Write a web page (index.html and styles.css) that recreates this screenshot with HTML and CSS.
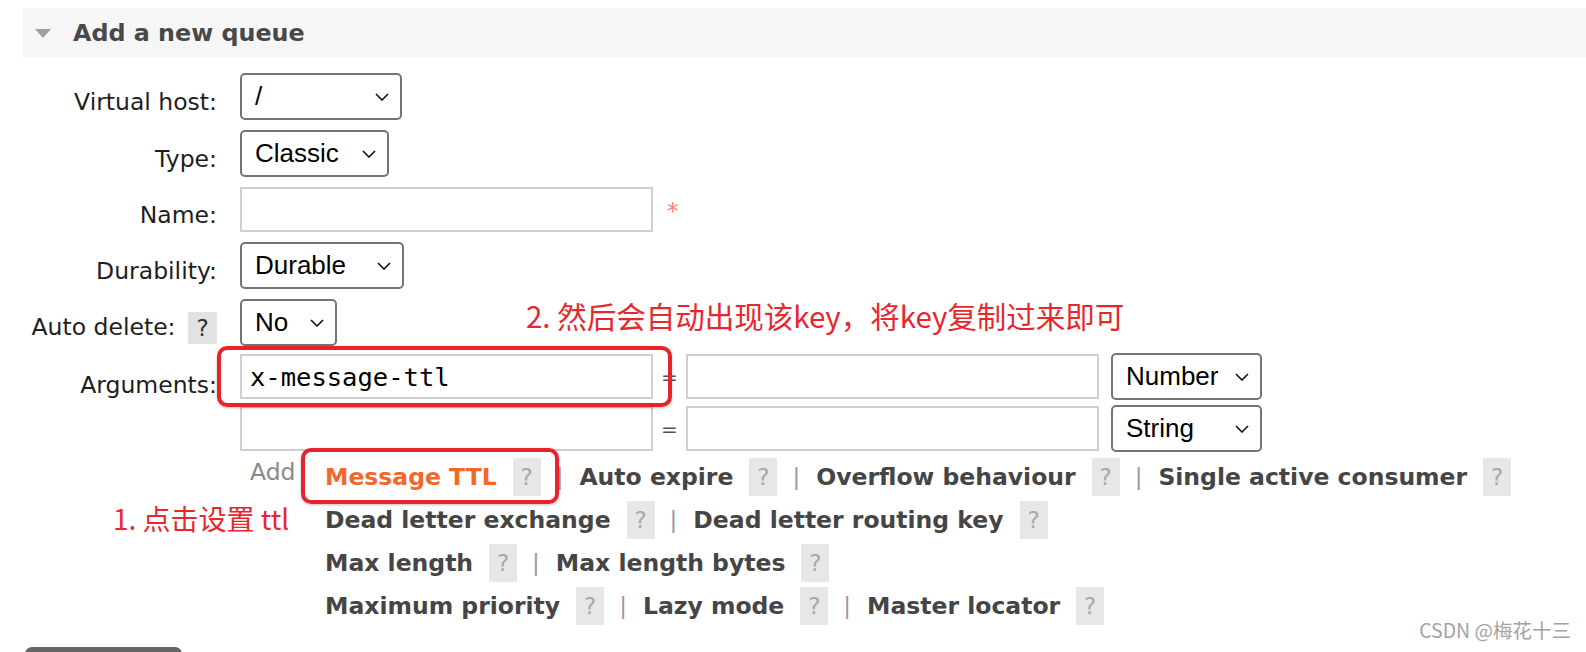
FILE: index.html
```html
<!DOCTYPE html>
<html lang="en">
<head>
    <meta charset="UTF-8">
    <title>Add a new queue</title>
    <link rel="stylesheet" href="styles.css">
</head>
<body>

<div class="section">
    <h2 class="section-head"><span class="tri"></span>Add a new queue</h2>

    <div class="form">
        <div class="lbl">Virtual host:</div>
        <div class="field">
            <div class="select w-vhost"><span>/</span>
                <svg class="chev" width="14" height="8" viewBox="0 0 14 8"><polyline points="1,1 7,7 13,1"/></svg></div>
        </div>

        <div class="lbl">Type:</div>
        <div class="field">
            <div class="select w-type"><span>Classic</span>
                <svg class="chev" width="14" height="8" viewBox="0 0 14 8"><polyline points="1,1 7,7 13,1"/></svg></div>
        </div>

        <div class="lbl">Name:</div>
        <div class="field">
            <div class="input w-name"></div>
            <span class="req">*</span>
        </div>

        <div class="lbl">Durability:</div>
        <div class="field">
            <div class="select w-dur"><span>Durable</span>
                <svg class="chev" width="14" height="8" viewBox="0 0 14 8"><polyline points="1,1 7,7 13,1"/></svg></div>
        </div>

        <div class="lbl">Auto delete: <span class="help dark">?</span></div>
        <div class="field">
            <div class="select w-no"><span>No</span>
                <svg class="chev" width="14" height="8" viewBox="0 0 14 8"><polyline points="1,1 7,7 13,1"/></svg></div>
            <div class="note note-two">2. 然后会自动出现该key，将key复制过来即可</div>
        </div>

        <div class="lbl args-lbl">Arguments:</div>
        <div class="field args">
            <div class="input w-arg mono">x-message-ttl</div>
            <span class="eq">=</span>
            <div class="input w-arg"></div>
            <div class="select w-kind"><span>Number</span>
                <svg class="chev" width="14" height="8" viewBox="0 0 14 8"><polyline points="1,1 7,7 13,1"/></svg></div>

            <div class="input w-arg"></div>
            <span class="eq">=</span>
            <div class="input w-arg"></div>
            <div class="select w-kind"><span>String</span>
                <svg class="chev" width="14" height="8" viewBox="0 0 14 8"><polyline points="1,1 7,7 13,1"/></svg></div>

            <div class="mark mark-key"></div>
        </div>

        <div class="lbl"></div>
        <div class="field arg-links">
            <span class="add">Add</span>
            <div class="link-rows">
                <div class="link-row">
                    <span class="alink hot">Message TTL</span><span class="help">?</span><span class="sep">|</span>
                    <span class="alink">Auto expire</span><span class="help">?</span><span class="sep">|</span>
                    <span class="alink">Overflow behaviour</span><span class="help">?</span><span class="sep">|</span>
                    <span class="alink">Single active consumer</span><span class="help">?</span>
                </div>
                <div class="link-row">
                    <span class="alink">Dead letter exchange</span><span class="help">?</span><span class="sep">|</span>
                    <span class="alink">Dead letter routing key</span><span class="help">?</span>
                </div>
                <div class="link-row">
                    <span class="alink">Max length</span><span class="help">?</span><span class="sep">|</span>
                    <span class="alink">Max length bytes</span><span class="help">?</span>
                </div>
                <div class="link-row">
                    <span class="alink">Maximum priority</span><span class="help">?</span><span class="sep">|</span>
                    <span class="alink">Lazy mode</span><span class="help">?</span><span class="sep">|</span>
                    <span class="alink">Master locator</span><span class="help">?</span>
                </div>
                <div class="mark mark-ttl"></div>
            </div>
            <div class="note note-one">1. 点击设置 ttl</div>
        </div>
    </div>

    <div class="button-top"></div>
</div>

<div class="watermark">CSDN @梅花十三</div>

</body>
</html>
```

FILE: styles.css
```css
body {
    margin: 0;
    font-family: "DejaVu Sans", Verdana, sans-serif;
    font-size: 23.5px;
    color: #1e1e1e;
    background: #fff;
    position: relative;
    height: 652px;
    overflow: hidden;
}
.section {
    padding-top: 8px;
}
.section-head {
    margin: 0 0 0 23px;
    height: 49px;
    background: #f6f6f6;
    display: flex;
    align-items: center;
    font-size: 23.8px;
    font-weight: bold;
    color: #484848;
}
.tri {
    width: 0;
    height: 0;
    border-left: 8px solid transparent;
    border-right: 8px solid transparent;
    border-top: 9px solid #a0a0a0;
    margin: 1px 22px 0 12px;
}
.form {
    display: grid;
    grid-template-columns: 219px auto;
    column-gap: 21px;
    row-gap: 10px;
    margin-top: 16px;
    align-items: center;
}
.lbl {
    text-align: right;
    white-space: nowrap;
    padding-right: 2px;
    padding-top: 10px;
}
.field {
    display: flex;
    align-items: center;
    position: relative;
}
.select {
    box-sizing: border-box;
    height: 47px;
    border: 2px solid #747474;
    border-radius: 5px;
    display: flex;
    align-items: center;
    justify-content: space-between;
    padding: 0 11px 0 13px;
    font-family: "Liberation Sans", Arial, sans-serif;
    font-size: 26px;
    color: #000;
    background: #fff;
}
.chev polyline {
    fill: none;
    stroke: #111;
    stroke-width: 1.6;
}
.w-vhost { width: 162px; }
.w-type { width: 149px; }
.w-dur { width: 164px; }
.w-no { width: 97px; }
.w-kind { width: 151px; }
.input {
    box-sizing: border-box;
    height: 45px;
    border: 2px solid #cfcfcf;
    background: #fff;
    display: flex;
    align-items: center;
    padding: 0 8px;
}
.w-name { width: 413px; }
.w-arg { width: 413px; }
.mono {
    font-family: "DejaVu Sans Mono", "Liberation Mono", monospace;
    font-size: 25.5px;
    color: #000;
}
.req {
    color: #f57d7d;
    font-size: 23px;
    margin-left: 14px;
    margin-top: 2px;
}
.help {
    display: inline-flex;
    align-items: center;
    justify-content: center;
    width: 28px;
    height: 38px;
    background: #e7e7e7;
    color: #a8a8a8;
    font-weight: normal;
    font-size: 23px;
}
.help.dark {
    height: 32px;
    width: 29px;
    margin-left: 5px;
    color: #333;
    background: #e2e2e2;
    vertical-align: middle;
}
.args-lbl {
    align-self: start;
    padding-top: 15px;
}
.args {
    display: grid;
    grid-template-columns: 413px 33px 413px 151px;
    column-gap: 0;
    row-gap: 5px;
    align-items: center;
    margin-top: -3px;
}
.args .select {
    margin-left: 12px;
}
.eq {
    text-align: center;
    color: #555;
    font-size: 20px;
}
.mark {
    position: absolute;
    border: 4px solid #e8232b;
    border-radius: 10px;
    box-shadow: 0 1px 3px rgba(0, 0, 0, 0.25);
    box-sizing: border-box;
}
.mark-key {
    left: -23px;
    top: -7px;
    width: 455px;
    height: 61px;
}
.arg-links {
    align-items: flex-start;
    margin-top: -7px;
}
.add {
    color: #8a8a8a;
    margin-left: 10px;
    width: 75px;
    line-height: 34px;
}
.link-rows {
    position: relative;
}
.link-row {
    display: flex;
    align-items: center;
    height: 43px;
}
.alink {
    font-weight: bold;
    color: #454545;
    margin-right: 16px;
}
.alink.hot {
    color: #f0682a;
}
.sep {
    color: #9a9a9a;
    font-size: 23px;
    margin: 0 16px 0 15px;
}
.mark-ttl {
    left: -24px;
    top: -7px;
    width: 258px;
    height: 56px;
}
.note {
    position: absolute;
    color: #e8262d;
    font-family: "Noto Sans CJK SC", "DejaVu Sans", sans-serif;
    white-space: nowrap;
    line-height: 1.1;
}
.note-two {
    left: 286px;
    top: 0;
    font-size: 29.5px;
}
.note-one {
    left: -127px;
    top: 48px;
    font-size: 28px;
}
.button-top {
    margin: 20px 0 0 25px;
    width: 157px;
    height: 14px;
    background: #666;
    border-radius: 7px 7px 0 0;
}
.watermark {
    position: absolute;
    right: 15px;
    top: 619px;
    font-family: "Noto Sans CJK SC", "DejaVu Sans", sans-serif;
    font-size: 19.5px;
    line-height: 1.1;
    color: #a3a3a3;
}
```
